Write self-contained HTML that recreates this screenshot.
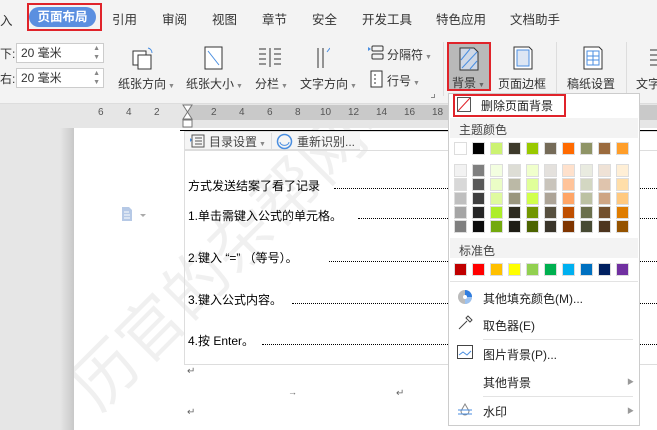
<!DOCTYPE html>
<html style="width:657px;height:430px;overflow:hidden"><head><meta charset="utf-8"><style>
*{margin:0;padding:0;box-sizing:border-box}
body{width:657px;height:430px;overflow:hidden;position:relative;background:#e6e6e6;font-family:"Liberation Sans","Noto Sans CJK SC",sans-serif;font-size:12px;color:#333}
.a{position:absolute;white-space:nowrap}
.sw{position:absolute;width:13px;height:13px;border:1px solid #ddd}
</style></head><body>
<div class="a" style="left:0;top:0;width:657px;height:104px;background:#f3f3f3;border-bottom:1px solid #ddd"></div>
<div class="a" style="left:0;top:10px;font-size:12.5px">入</div>
<div class="a" style="left:27px;top:3px;width:75px;height:28px;border:2px solid #e0232a"></div>
<div class="a" style="left:29px;top:7px;width:67px;height:20px;border-radius:10px;background:#5b8fe0;color:#fff;font-size:12.5px;font-weight:bold;text-align:center;line-height:20px">页面布局</div>
<div class="a" style="left:112px;top:9px;font-size:12.5px">引用</div>
<div class="a" style="left:162px;top:9px;font-size:12.5px">审阅</div>
<div class="a" style="left:212px;top:9px;font-size:12.5px">视图</div>
<div class="a" style="left:262px;top:9px;font-size:12.5px">章节</div>
<div class="a" style="left:312px;top:9px;font-size:12.5px">安全</div>
<div class="a" style="left:362px;top:9px;font-size:12.5px">开发工具</div>
<div class="a" style="left:436px;top:9px;font-size:12.5px">特色应用</div>
<div class="a" style="left:510px;top:9px;font-size:12.5px">文档助手</div>
<div class="a" style="left:0;top:45px">下:</div>
<div class="a" style="left:16px;top:43px;width:88px;height:20px;background:#fff;border:1px solid #ccc;padding-left:4px;line-height:18px">20 毫米<span style="position:absolute;right:3px;top:0;font-size:7px;color:#888;line-height:9px">▲<br>▼</span></div>
<div class="a" style="left:0;top:70px">右:</div>
<div class="a" style="left:16px;top:68px;width:88px;height:20px;background:#fff;border:1px solid #ccc;padding-left:4px;line-height:18px">20 毫米<span style="position:absolute;right:3px;top:0;font-size:7px;color:#888;line-height:9px">▲<br>▼</span></div>
<svg class="a" style="left:130px;top:45px" width="28" height="26"><rect x="3" y="6" width="13" height="14" fill="#fff" stroke="#333"/><rect x="8" y="10" width="13" height="14" fill="#fff" stroke="#333"/><path d="M18 3a5 5 0 0 1 4 5" stroke="#4a8ee0" fill="none"/></svg>
<svg class="a" style="left:203px;top:45px" width="22" height="26"><rect x="2" y="2" width="17" height="22" fill="#fff" stroke="#333"/><path d="M5 6L16 20" stroke="#4a8ee0"/></svg>
<svg class="a" style="left:258px;top:46px" width="24" height="22"><path d="M1 3h7M1 8h7M1 13h7M1 18h7M12 2v19M16 3h7M16 8h7M16 13h7M16 18h7" stroke="#333"/></svg>
<svg class="a" style="left:316px;top:46px" width="14" height="22"><path d="M2 2v20M7 2v20" stroke="#333"/><path d="M11 6l3-4" stroke="#4a8ee0"/></svg>
<div class="a" style="left:118px;top:75px">纸张方向<span style="font-size:7px;color:#888"> ▼</span></div>
<div class="a" style="left:186px;top:75px">纸张大小<span style="font-size:7px;color:#888"> ▼</span></div>
<div class="a" style="left:255px;top:75px">分栏<span style="font-size:7px;color:#888"> ▼</span></div>
<div class="a" style="left:300px;top:75px">文字方向<span style="font-size:7px;color:#888"> ▼</span></div>
<svg class="a" style="left:367px;top:44px" width="18" height="18"><path d="M1 3l3 2-3 2z" fill="#4a8ee0"/><rect x="5" y="2" width="11" height="5" rx="1" fill="none" stroke="#333"/><rect x="5" y="10" width="11" height="5" rx="1" fill="none" stroke="#333"/></svg>
<div class="a" style="left:387px;top:46px">分隔符<span style="font-size:7px;color:#888"> ▼</span></div>
<svg class="a" style="left:370px;top:70px" width="14" height="18"><rect x="1" y="1" width="11" height="16" fill="#fff" stroke="#333"/><path d="M4 5h2M4 9h2M4 13h2" stroke="#333"/></svg>
<div class="a" style="left:387px;top:72px">行号<span style="font-size:7px;color:#888"> ▼</span></div>
<div class="a" style="left:431px;top:94px;width:4px;height:4px;border-right:1px solid #888;border-bottom:1px solid #888"></div>
<div class="a" style="left:443px;top:42px;width:1px;height:54px;background:#ddd"></div>
<div class="a" style="left:447px;top:42px;width:44px;height:49px;background:#b9b9b9;border:2px solid #e0232a"></div>
<svg class="a" style="left:458px;top:46px" width="22" height="26"><path d="M2 2h14l4 4v18H2z" fill="#cfd8e6" stroke="#333"/><path d="M3 14L12 3M4 22L19 6M12 23l7-8" stroke="#4a8ee0"/></svg>
<div class="a" style="left:452px;top:74px">背景<span style="font-size:7px;color:#666"> ▼</span></div>
<svg class="a" style="left:512px;top:45px" width="22" height="26"><path d="M2 2h15l3 3v19H2z" fill="#fff" stroke="#333"/><rect x="5" y="5" width="12" height="16" fill="#dde6f3" stroke="#4a8ee0"/></svg>
<div class="a" style="left:498px;top:75px">页面边框</div>
<div class="a" style="left:556px;top:42px;width:1px;height:54px;background:#ddd"></div>
<svg class="a" style="left:582px;top:45px" width="22" height="26"><path d="M2 2h15l3 3v19H2z" fill="#fff" stroke="#333"/><rect x="5" y="6" width="12" height="14" fill="none" stroke="#4a8ee0"/><path d="M5 11h12M5 15h12M11 6v14" stroke="#4a8ee0"/></svg>
<div class="a" style="left:567px;top:75px">稿纸设置</div>
<div class="a" style="left:626px;top:42px;width:1px;height:54px;background:#ddd"></div>
<svg class="a" style="left:650px;top:48px" width="7" height="20"><path d="M0 2h8M0 7h8M0 12h8M0 17h8" stroke="#333"/></svg>
<div class="a" style="left:636px;top:75px;width:21px;overflow:hidden">文字</div>
<div class="a" style="left:0;top:105px;width:657px;height:15px;background:#e6e6e6"></div>
<div class="a" style="left:187px;top:105px;width:470px;height:15px;background:#c9c9c9"></div>
<div class="a" style="left:0;top:107px;width:657px;height:13px;font-size:10px;color:#555">
<span class="a" style="left:98px">6</span><span class="a" style="left:126px">4</span><span class="a" style="left:154px">2</span><span class="a" style="left:211px">2</span><span class="a" style="left:239px">4</span><span class="a" style="left:267px">6</span><span class="a" style="left:295px">8</span><span class="a" style="left:320px">10</span><span class="a" style="left:348px">12</span><span class="a" style="left:376px">14</span><span class="a" style="left:404px">16</span><span class="a" style="left:432px">18</span></div>
<svg class="a" style="left:182px;top:104px" width="12" height="24"><path d="M1 1h9L5.5 8zM1 15h9L5.5 8z" fill="#fff" stroke="#777"/><rect x="1" y="16" width="9" height="7" fill="#fff" stroke="#777"/></svg>
<div class="a" style="left:60px;top:128px;width:14px;height:302px;background:linear-gradient(to right,#e6e6e6,#c8c8c8)"></div>
<svg class="a" style="left:74px;top:128px" width="583" height="302"><rect width="583" height="302" fill="#fff"/><text x="25" y="285" transform="rotate(-45 25 285)" font-size="64" fill="#000" fill-opacity="0.06" font-family="Liberation Sans, Noto Sans CJK SC, sans-serif">历官的杂帮网电</text></svg>
<div class="a" style="left:180px;top:130px;width:477px;height:1px;background:#000"></div>
<div class="a" style="left:184px;top:131px;width:473px;height:234px;border:1px solid #ddd;border-right:none"></div>
<div class="a" style="left:185px;top:132px;width:175px;height:18px;background:#f5f5f5;border-bottom:1px solid #ddd"></div>
<div class="a" style="left:185px;top:150px;width:472px;height:1px;background:#ddd"></div>
<svg class="a" style="left:189px;top:134px" width="16" height="14"><path d="M1 4l2 2-2 2z" fill="#4a8ee0"/><rect x="3" y="1" width="12" height="12" fill="none" stroke="#555"/><path d="M6 4h7M6 7h7M6 10h7" stroke="#555"/></svg>
<div class="a" style="left:209px;top:133px;color:#444">目录设置<span style="font-size:7px;color:#888"> ▼</span></div>
<div class="a" style="left:271px;top:133px;width:1px;height:16px;background:#ddd"></div>
<svg class="a" style="left:276px;top:133px" width="17" height="17"><circle cx="8.5" cy="8.5" r="7" fill="none" stroke="#4a8ee0" stroke-width="1.5"/><path d="M4 9a4 3 0 0 0 9 0" fill="none" stroke="#4a8ee0"/></svg>
<div class="a" style="left:297px;top:133px;color:#444">重新识别...</div>
<div class="a" style="left:188px;top:177px;color:#000">方式发送结案了看了记录</div>
<div class="a" style="left:334px;top:188px;width:120px;border-top:1px dotted #000"></div>
<div class="a" style="left:188px;top:207px;color:#000">1.单击需键入公式的单元格。</div>
<div class="a" style="left:358px;top:218px;width:96px;border-top:1px dotted #000"></div>
<div class="a" style="left:188px;top:249px;color:#000">2.键入 “=” （等号）。</div>
<div class="a" style="left:329px;top:261px;width:125px;border-top:1px dotted #000"></div>
<div class="a" style="left:188px;top:291px;color:#000">3.键入公式内容。</div>
<div class="a" style="left:292px;top:303px;width:162px;border-top:1px dotted #000"></div>
<div class="a" style="left:188px;top:332px;color:#000">4.按 Enter。</div>
<div class="a" style="left:262px;top:344px;width:192px;border-top:1px dotted #000"></div>
<div class="a" style="left:640px;top:188px;width:17px;border-top:1px dotted #000"></div>
<div class="a" style="left:640px;top:218px;width:17px;border-top:1px dotted #000"></div>
<div class="a" style="left:640px;top:261px;width:17px;border-top:1px dotted #000"></div>
<div class="a" style="left:640px;top:303px;width:17px;border-top:1px dotted #000"></div>
<div class="a" style="left:640px;top:344px;width:17px;border-top:1px dotted #000"></div>
<div class="a" style="left:187px;top:366px;font-size:10px;line-height:12px;color:#666">↵</div>
<div class="a" style="left:288px;top:386px;font-size:9px;line-height:12px;color:#666">→</div>
<div class="a" style="left:396px;top:388px;font-size:10px;line-height:12px;color:#666">↵</div>
<div class="a" style="left:187px;top:407px;font-size:10px;line-height:12px;color:#666">↵</div>
<svg class="a" style="left:120px;top:206px" width="28" height="16"><path d="M2 1h7l3 3v11H2z" fill="#b6c9e6"/><path d="M4 6h5M4 9h6M4 12h6" stroke="#fff"/><path d="M20 8l3 3 3-3z" fill="#aaa"/></svg>
<div class="a" style="left:448px;top:93px;width:192px;height:333px;background:#fff;border:1px solid #ccc"></div>
<div class="a" style="left:453px;top:94px;width:113px;height:23px;border:2px solid #e0232a"></div>
<svg class="a" style="left:457px;top:97px" width="14" height="15"><rect x="0.5" y="0.5" width="13" height="14" fill="#fff" stroke="#555"/><path d="M1 14L13 1" stroke="#e0232a"/></svg>
<div class="a" style="left:481px;top:97px;color:#222">删除页面背景</div>
<div class="a" style="left:450px;top:118px;width:188px;height:20px;background:#f3f3f3"></div>
<div class="a" style="left:459px;top:121px;color:#444">主题颜色</div>
<div class="a" style="left:450px;top:238px;width:188px;height:20px;background:#f3f3f3"></div>
<div class="a" style="left:459px;top:242px;color:#444">标准色</div>
<div id="sw"></div>
<div class="a" style="left:450px;top:281px;width:188px;height:1px;background:#e3e3e3"></div>
<svg class="a" style="left:457px;top:289px" width="16" height="16"><circle cx="8" cy="8" r="7" fill="#bbb"/><path d="M8 8V1a7 7 0 0 1 7 7z" fill="#2f7de0"/><path d="M8 8h7a7 7 0 0 1-7 7z" fill="#9cc2f0"/><circle cx="8" cy="8" r="2" fill="#fff"/></svg>
<div class="a" style="left:483px;top:290px;color:#222">其他填充颜色(M)...</div>
<svg class="a" style="left:457px;top:315px" width="16" height="16"><path d="M2 14l8-8M9 3l4 4M11 1l4 4-2 2-4-4z" stroke="#444" fill="none"/></svg>
<div class="a" style="left:483px;top:317px;color:#222">取色器(E)</div>
<div class="a" style="left:483px;top:339px;width:150px;height:1px;background:#e3e3e3"></div>
<svg class="a" style="left:457px;top:345px" width="16" height="14"><rect x="0.5" y="0.5" width="15" height="13" fill="#fff" stroke="#444"/><path d="M2 10l4-3 4 3 4-4" stroke="#4a8ee0" fill="none"/></svg>
<div class="a" style="left:483px;top:346px;color:#222">图片背景(P)...</div>
<div class="a" style="left:483px;top:374px;color:#222">其他背景</div>
<div class="a" style="left:627px;top:377px;font-size:7px;color:#999">▶</div>
<div class="a" style="left:483px;top:396px;width:150px;height:1px;background:#e3e3e3"></div>
<svg class="a" style="left:457px;top:403px" width="16" height="14"><path d="M8 1L4 8a4 4 0 0 0 8 0z" fill="none" stroke="#888"/><path d="M1 7h14M1 11h14" stroke="#4a8ee0"/></svg>
<div class="a" style="left:483px;top:404px;line-height:16px;color:#222">水印</div>
<div class="a" style="left:627px;top:407px;font-size:7px;line-height:10px;color:#999">▶</div>
<script>
var top1=["#ffffff","#000000","#ccf272","#3d3a2b","#99c900","#756b58","#ff6a00","#8f9466","#9b6b3e","#ff9e2a"];
var g=[["#f2f2f2","#7f7f7f","#f3fee0","#ddddd5","#f0ffcc","#e4e1dd","#ffe1cc","#e9ebe0","#efe2d6","#ffefd6"],
["#d8d8d8","#595959","#ebfdc6","#bbb9a6","#e0ff99","#c9c4bb","#ffc399","#d3d7c2","#dfc4ad","#ffdea9"],
["#bfbfbf","#3f3f3f","#dffa9f","#9a967e","#d1ff4c","#ada497","#ffa566","#bcc1a3","#cea584","#ffc980"],
["#a5a5a5","#262626","#aded2a","#2e2c20","#729600","#57503f","#bf4f00","#6b6f4c","#73502d","#df7c00"],
["#7f7f7f","#0c0c0c","#73a90e","#1e1d15","#4c6400","#3a352a","#7f3500","#474a33","#4d351e","#955300"]];
var std=["#c00000","#ff0000","#ffc000","#ffff00","#92d050","#00b050","#00b0f0","#0070c0","#002060","#7030a0"];
var h="";
function row(c,y){for(var i=0;i<10;i++)h+='<div class="sw" style="left:'+(454+i*18)+'px;top:'+y+'px;background:'+c[i]+'"></div>';}
row(top1,142);for(var r=0;r<5;r++)row(g[r],164+r*14);row(std,263);
document.getElementById("sw").outerHTML=h;
</script>
</body></html>
